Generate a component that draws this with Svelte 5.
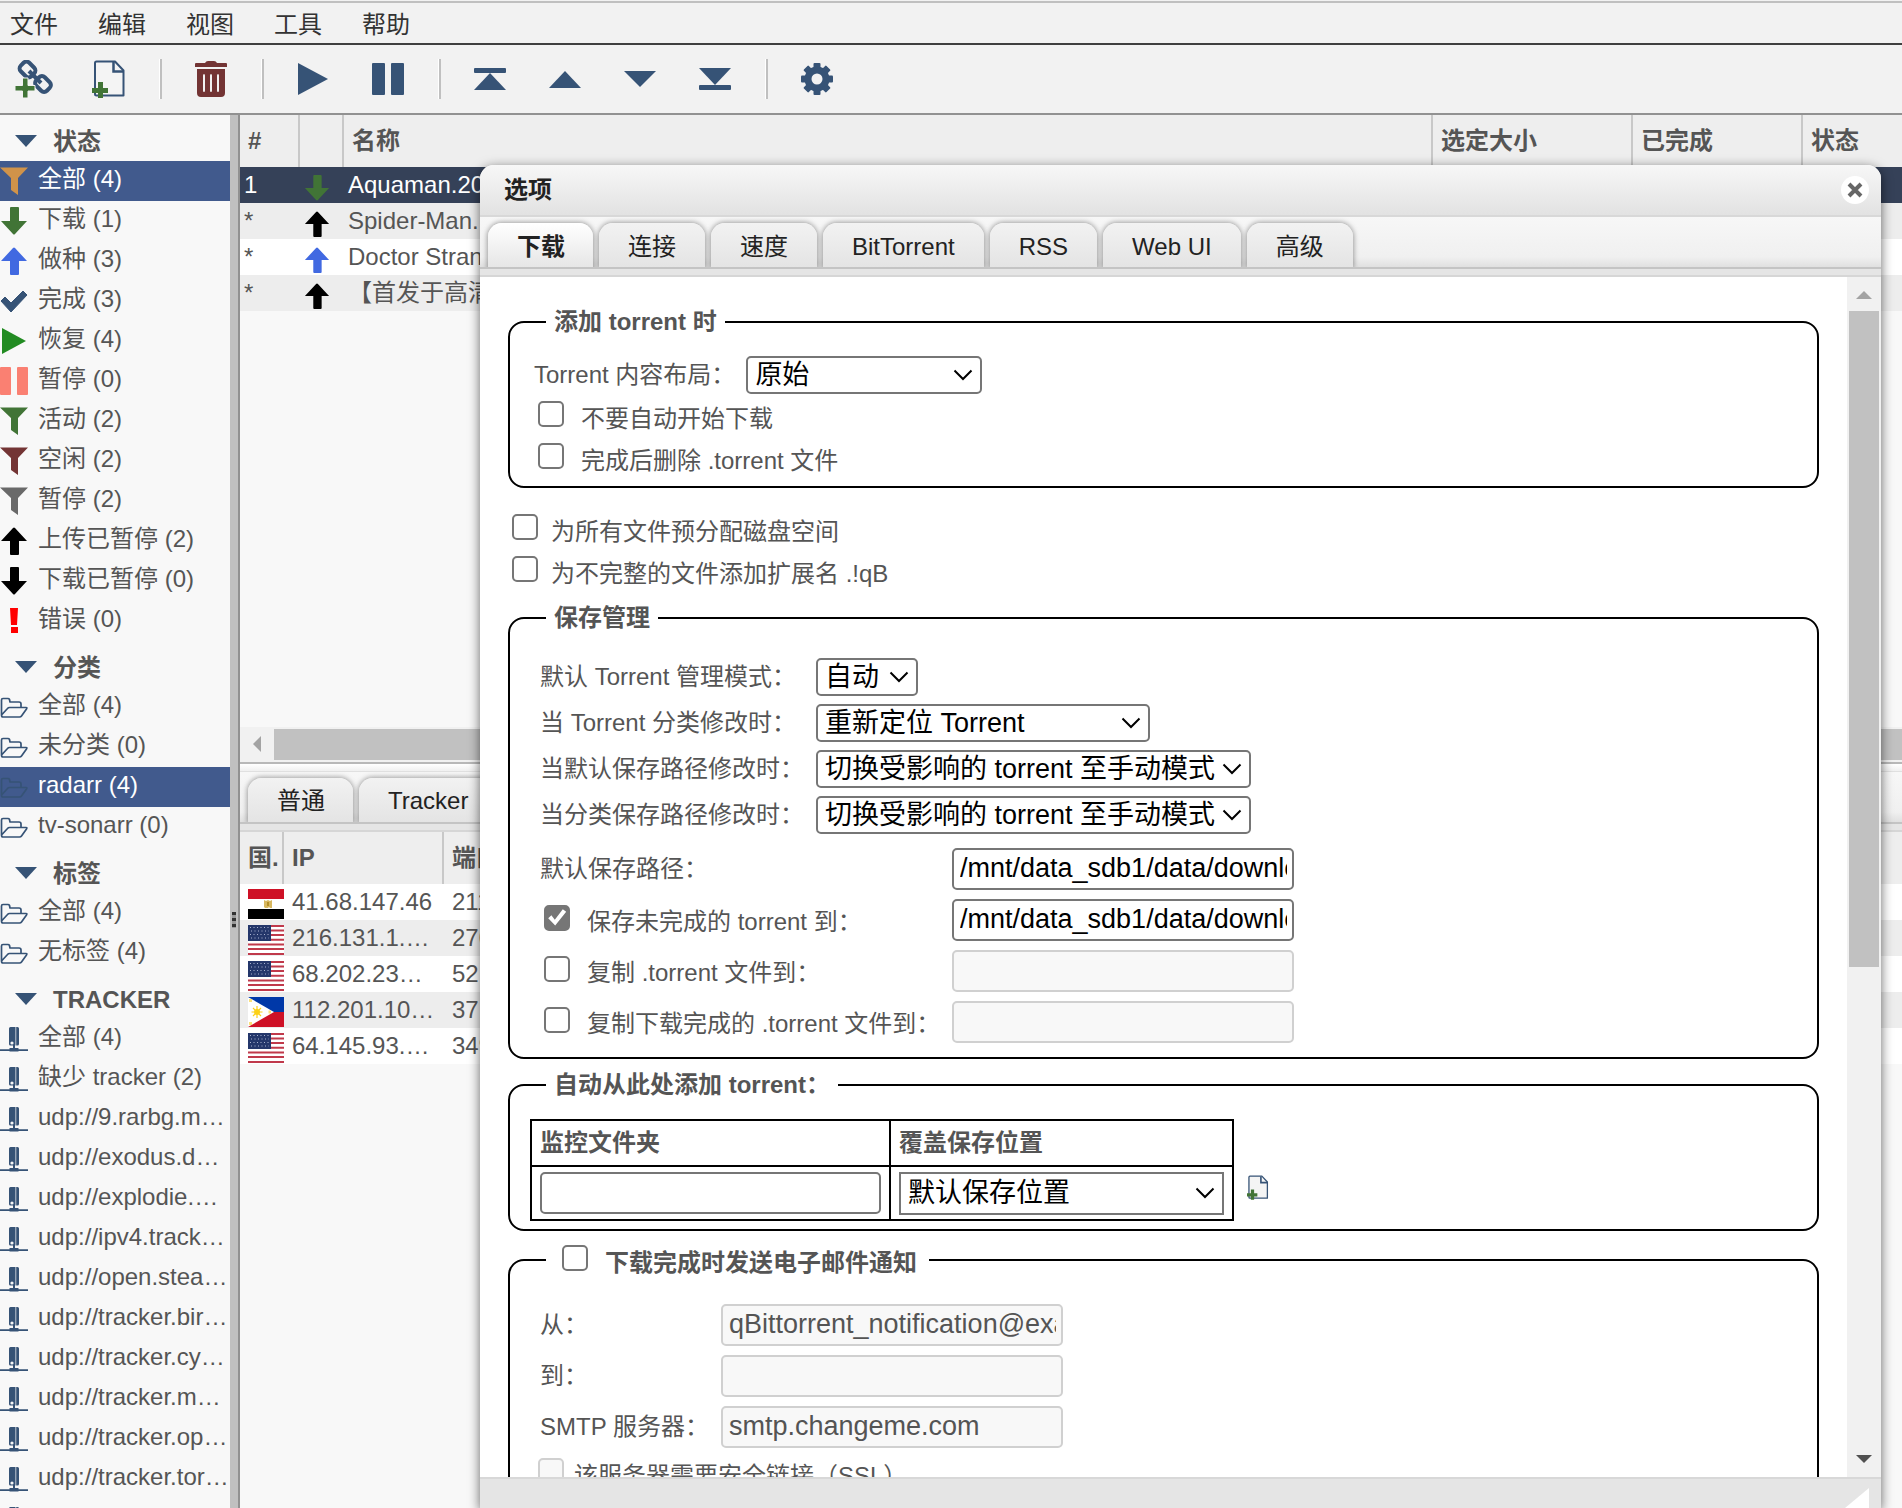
<script>
  // Menu + toolbar
  const menus = ['文件', '编辑', '视图', '工具', '帮助'];
  const tools = [
    { icon: 'link', label: '添加 Torrent 链接' },
    { icon: 'fileadd', label: '添加 Torrent 文件' },
    null,
    { icon: 'trash', label: '删除' },
    null,
    { icon: 'play', label: '恢复' },
    { icon: 'pause', label: '暂停' },
    null,
    { icon: 'top', label: '移到顶部' },
    { icon: 'up', label: '上移' },
    { icon: 'down', label: '下移' },
    { icon: 'bottom', label: '移到底部' },
    null,
    { icon: 'gear', label: '选项' }
  ];

  // Sidebar filters
  const tracker = (text) => ({ icon: 'server', color: '#365376', text });
  const folder = (text) => ({ icon: 'folder', color: '#365376', text });
  const groups = [
    {
      title: '状态',
      items: [
        { icon: 'filter', color: '#d0934a', text: '全部 (4)' },
        { icon: 'arrowdown', color: '#417436', text: '下载 (1)' },
        { icon: 'arrowup', color: '#4169e1', text: '做种 (3)' },
        { icon: 'check', color: '#365376', text: '完成 (3)' },
        { icon: 'resume', color: '#228b22', text: '恢复 (4)' },
        { icon: 'paused', color: '#fa8072', text: '暂停 (0)' },
        { icon: 'filter', color: '#417436', text: '活动 (2)' },
        { icon: 'filter', color: '#733434', text: '空闲 (2)' },
        { icon: 'filter', color: '#696969', text: '暂停 (2)' },
        { icon: 'arrowup', color: '#000', text: '上传已暂停 (2)' },
        { icon: 'arrowdown', color: '#000', text: '下载已暂停 (0)' },
        { icon: 'error', color: '#f00', text: '错误 (0)' }
      ]
    },
    { title: '分类', items: [folder('全部 (4)'), folder('未分类 (0)'), folder('radarr (4)'), folder('tv-sonarr (0)')] },
    { title: '标签', items: [folder('全部 (4)'), folder('无标签 (4)')] },
    {
      title: 'TRACKER',
      items: [
        tracker('全部 (4)'),
        tracker('缺少 tracker (2)'),
        tracker('udp://9.rarbg.me:2970 (1)'),
        tracker('udp://exodus.desync.com (1)'),
        tracker('udp://explodie.org:6969 (1)'),
        tracker('udp://ipv4.tracker.harry.lu (1)'),
        tracker('udp://open.stealth.si (1)'),
        tracker('udp://tracker.birkenwald.de (1)'),
        tracker('udp://tracker.cyberia.is (1)'),
        tracker('udp://tracker.moeking.me (1)'),
        tracker('udp://tracker.opentrackr.org (1)'),
        tracker('udp://tracker.torrent.eu.org (1)'),
        tracker('udp://tracker.zerobytes.xyz (1)')
      ]
    }
  ];

  let selected = $state(['0-0', '1-2']);

  const torrents = [
    { n: '1', icon: 'arrowdown', color: '#417436', name: 'Aquaman.2018' },
    { n: '*', icon: 'arrowup', color: '#000', name: 'Spider-Man.Far' },
    { n: '*', icon: 'arrowup', color: '#4169e1', name: 'Doctor Strange' },
    { n: '*', icon: 'arrowup', color: '#000', name: '【首发于高清影视' }
  ];

  const peers = [
    { flag: 'eg', ip: '41.68.147.46', port: '21139' },
    { flag: 'us', ip: '216.131.1.204', port: '27015' },
    { flag: 'us', ip: '68.202.231.114', port: '52133' },
    { flag: 'ph', ip: '112.201.104.12', port: '37120' },
    { flag: 'us', ip: '64.145.93.114', port: '34902' }
  ];

  // Options dialog
  const tabs = ['下载', '连接', '速度', 'BitTorrent', 'RSS', 'Web UI', '高级'];
  let activeTab = $state('下载');
  let dialogOpen = $state(true);

  const modes = [
    { id: 'tmm', label: '默认 Torrent 管理模式：', value: '自动', size: 'w-mode' },
    { id: 'catchg', label: '当 Torrent 分类修改时：', value: '重新定位 Torrent', size: 'w-relocate' },
    { id: 'pathchg', label: '当默认保存路径修改时：', value: '切换受影响的 torrent 至手动模式', size: 'w-switch' },
    { id: 'catpath', label: '当分类保存路径修改时：', value: '切换受影响的 torrent 至手动模式', size: 'w-switch' }
  ];
  let paths = $state([
    { id: 'temp', label: '保存未完成的 torrent 到：', on: true, value: '/mnt/data_sdb1/data/downloads/temp' },
    { id: 'copy', label: '复制 .torrent 文件到：', on: false, value: '' },
    { id: 'copyfin', label: '复制下载完成的 .torrent 文件到：', on: false, value: '' }
  ]);
  let mailOn = $state(false);
  const mail = [
    { id: 'from', label: '从：', value: 'qBittorrent_notification@example.com' },
    { id: 'to', label: '到：', value: '' },
    { id: 'smtp', label: 'SMTP 服务器：', value: 'smtp.changeme.com' }
  ];

  function pick(g, i) {
    selected = [...selected.filter((k) => !k.startsWith(g + '-')), `${g}-${i}`];
  }
</script>

{#snippet glyph(name)}
  <svg class="glyph" viewBox="0 0 28 28" aria-hidden="true">
    {#if name === 'filter'}
      <path d="M0 0.5h28L18 11v17l-7-5V11z" fill="currentColor" />
    {:else if name === 'arrowdown'}
      <path d="M10 1q0-1 1-1h7q1 0 1 1v13h8L15 27q-1 1-2 0L1 14h9z" fill="currentColor" />
    {:else if name === 'arrowup'}
      <path d="M10 27q0 1 1 1h7q1 0 1-1V14h8L15 1q-1-1-2 0L1 14h9z" fill="currentColor" />
    {:else if name === 'check'}
      <path d="M1 14l4-4 6 6L23 4l4 4-16 17z" fill="currentColor" stroke="currentColor" stroke-linejoin="round" />
    {:else if name === 'resume'}
      <path d="M2 1l24 13L2 27z" fill="currentColor" />
    {:else if name === 'paused'}
      <path d="M1 0h9q1 0 1 1v26q0 1-1 1H1q-1 0-1-1V1q0-1 1-1zM18 0h9q1 0 1 1v26q0 1-1 1h-9q-1 0-1-1V1q0-1 1-1z" fill="currentColor" />
    {:else if name === 'error'}
      <path d="M10 1h8l-1 17h-6zM11 20h7v6h-7z" fill="currentColor" />
    {:else if name === 'folder'}
      <path d="M1.500 22V7q0-1.500 1.500-1.500h5q1 0 1.500 1L10 9h9q2 0 2 2v3.500M1.500 22l6-6.500q.8-1 2-1H26q1.500 0 .5 1.500l-5 7q-.7 1-2 1H3q-1.500 0-1.500-2z" fill="none" stroke="currentColor" stroke-width="1.700" stroke-linejoin="round" />
    {:else if name === 'server'}
      <path d="M10.500 2h5v18.500h-5q-1.500 0-1.500-1.500V3.500Q9 2 10.500 2zM16.200 2h1.300q1.500 0 1.500 1.500V19q0 1.500-1.500 1.500h-1.300z" fill="currentColor" />
      <circle cx="12" cy="18" r="1.600" fill="#f8f8f8" />
      <path d="M13 20h2v4h-2zM9.500 23h9v3.500h-9zM0 24.200h28v1.800H0z" fill="currentColor" />
    {/if}
  </svg>
{/snippet}

{#snippet fileAdd()}
  <svg class="fileadd" viewBox="0 0 34 38" aria-hidden="true">
    <path d="M4.500 1.500H23l8.500 9V35.500h-27q-1.500 0-1.500-1.500V3q0-1.500 1.500-1.500z" fill="#f4f4f4" stroke="#365376" stroke-width="2" stroke-linejoin="round" />
    <path d="M21.500 2v9.500h10" fill="none" stroke="#365376" stroke-width="2.500" />
    <path d="M0 28h6v-6h5v6h5v5h-5v5H6v-5H0z" fill="#417436" />
  </svg>
{/snippet}

{#snippet flag(code)}
  <svg class="flag" viewBox="0 0 36 30" preserveAspectRatio="none" aria-hidden="true">
    {#if code === 'eg'}
      <path d="M0 0h36v10H0z" fill="#ce1126" /><path d="M0 10h36v10H0z" fill="#fff" /><path d="M0 20h36v10H0z" />
      <path d="M16 11l2 1 2-1 2 1 2-1v8h-2l-1-1-1 1h-3l-1-1z" fill="#d8b860" /><path d="M19 13h2v4h-2z" fill="#b58f28" />
    {:else if code === 'us'}
      <path d="M0 0h36v30H0z" fill="#fff" />
      <path d="M0 1h36M0 5.500h36M0 10h36M0 14.800h36M0 19.500h36M0 24h36M0 29h36" stroke="#c0394b" stroke-width="2" />
      <path d="M0 0h23v16H0z" fill="#24376b" />
      <path d="M2 2.500h20M3 6h18M2 9.500h20M3 13h18" stroke="#aab4d0" stroke-width="1" stroke-dasharray="1 2.500" />
    {:else}
      <path d="M0 0h36v15H0z" fill="#0038a8" /><path d="M0 15h36v15H0z" fill="#ce1126" /><path d="M0 0l26 15L0 30z" fill="#fff" />
      <g stroke="#fcd116" stroke-width="1.200"><path d="M9 9v12M3.500 15h11M5 11l8 8M13 11l-8 8" /></g>
      <circle cx="9" cy="15" r="3" fill="#fcd116" />
      <path d="M1 2h3v3H1zM1 25h3v3H1zM20.500 13.500h2.500v3h-2.500z" fill="#fbe07a" />
    {/if}
  </svg>
{/snippet}

{#snippet chevron()}
  <svg class="chevron" viewBox="0 0 20 12" aria-hidden="true"><path d="M1.500 1.500L10 10l8.500-8.500" fill="none" stroke="#000" stroke-width="2" /></svg>
{/snippet}

<div class="app">
  <nav class="menubar">
    {#each menus as m}<button>{m}</button>{/each}
  </nav>

  <div class="toolbar">
    {#each tools as t}
      {#if !t}
        <span class="sep"></span>
      {:else}
        <button aria-label={t.label}>
          {#if t.icon === 'fileadd'}
            {@render fileAdd()}
          {:else}
            <svg width="38" height="38" viewBox="0 0 38 38" fill="#365376" aria-hidden="true">
              {#if t.icon === 'link'}
                <g fill="none" stroke="#365376" stroke-width="4">
                  <rect x="-7.500" y="-6" width="15" height="12" rx="4" transform="translate(12.500 9.500) rotate(45)" />
                  <rect x="-7.500" y="-6" width="15" height="12" rx="4" transform="translate(28 24) rotate(45)" />
                  <path d="M14 11l12 12" />
                </g>
                <path d="M0 25.500h7.500V18h5.500v7.500h7V31h-7v7H7.500v-7H0z" fill="#417436" stroke="#f2f2f2" />
              {:else if t.icon === 'trash'}
                <g fill="#733434">
                  <path d="M13 3q1-2 3-2h6q2 0 3 2h9q1 0 1 1v3H3V4q0-1 1-1z" />
                  <path fill-rule="evenodd" d="M5 9h28v24q0 4-4 4H9q-4 0-4-4zM12 14q-1 0-1 1.500v15q0 1.500 1 1.500t1-1.500v-15Q13 14 12 14zM19 14q-1 0-1 1.500v15q0 1.500 1 1.500t1-1.500v-15Q20 14 19 14zM26 14q-1 0-1 1.500v15q0 1.500 1 1.500t1-1.500v-15Q27 14 26 14z" />
                </g>
              {:else if t.icon === 'play'}
                <path d="M4 3l30 16L4 35z" />
              {:else if t.icon === 'pause'}
                <rect x="3" y="3" width="13" height="32" rx="1" /><rect x="22" y="3" width="13" height="32" rx="1" />
              {:else if t.icon === 'top'}
                <rect x="3" y="8" width="32" height="5" rx="1" /><path d="M19 13l16 17H3z" />
              {:else if t.icon === 'up'}
                <path d="M19 11l16 17H3z" />
              {:else if t.icon === 'down'}
                <path d="M3 11h32L19 27z" />
              {:else if t.icon === 'bottom'}
                <path d="M3 8h32L19 25z" /><rect x="3" y="25" width="32" height="5" rx="1" />
              {:else if t.icon === 'gear'}
                <circle cx="19" cy="19" r="9" fill="none" stroke="#365376" stroke-width="7" />
                {#each [0, 45, 90, 135, 180, 225, 270, 315] as a}
                  <rect x="15.500" y="3" width="7" height="6" rx="1" transform="rotate({a} 19 19)" />
                {/each}
              {/if}
            </svg>
          {/if}
        </button>
      {/if}
    {/each}
  </div>

  <div class="desktop">
    <aside class="sidebar">
      {#each groups as group, g}
        <h2><span class="caret"></span><span>{group.title}</span></h2>
        <ul>
          {#each group.items as item, i}
            <li>
              <button class:selected={selected.includes(`${g}-${i}`)} onclick={() => pick(g, i)}>
                <span class="icon" style:color={item.color}>{@render glyph(item.icon)}</span>
                <span class="text">{item.text}</span>
              </button>
            </li>
          {/each}
        </ul>
      {/each}
    </aside>
    <div class="splitter"><span class="grip"></span></div>

    <main>
      <section class="transfers">
        <table class="grid">
          <colgroup>
            <col class="c-num" /><col class="c-icon" /><col /><col class="c-size" /><col class="c-done" /><col class="c-state" />
          </colgroup>
          <thead>
            <tr><th>#</th><th></th><th>名称</th><th>选定大小</th><th>已完成</th><th>状态</th></tr>
          </thead>
          <tbody>
            {#each torrents as t, i}
              <tr class:current={i === 0}>
                <td>{t.n}</td>
                <td><span class="icon" style:color={t.color}>{@render glyph(t.icon)}</span></td>
                <td>{t.name}</td><td></td><td></td><td></td>
              </tr>
            {/each}
          </tbody>
        </table>
        <div class="hscroll"><span class="arrow-left"></span><span class="hthumb"></span></div>
      </section>

      <section class="details">
        <div class="handle"></div>
        <div class="tabs">
          <button>普通</button>
          <button>Tracker</button>
        </div>
        <div class="tabline"></div>
        <table class="grid peers">
          <colgroup><col class="c-flag" /><col class="c-ip" /><col /></colgroup>
          <thead><tr><th>国.</th><th>IP</th><th>端口</th></tr></thead>
          <tbody>
            {#each peers as p}
              <tr><td>{@render flag(p.flag)}</td><td>{p.ip}</td><td>{p.port}</td></tr>
            {/each}
          </tbody>
        </table>
      </section>
    </main>
  </div>

  {#if dialogOpen}
    <div class="dialog" role="dialog" aria-labelledby="dlg-title">
      <header>
        <h3 id="dlg-title">选项</h3>
        <button class="close" aria-label="关闭" onclick={() => (dialogOpen = false)}>
          <svg width="28" height="28" viewBox="0 0 28 28"><circle cx="14" cy="14" r="14" fill="#fff" /><path d="M8 8l12 12M20 8L8 20" stroke="#666" stroke-width="4" /></svg>
        </button>
      </header>
      <div class="tabs">
        {#each tabs as tab}
          <button class:active={activeTab === tab} onclick={() => (activeTab = tab)}>{tab}</button>
        {/each}
      </div>
      <div class="tabline"></div>

      <div class="body">
        <form class="options">
          <fieldset class="adding">
            <legend>添加 torrent 时</legend>
            <div class="layout-row">
              <label for="layout">Torrent 内容布局：</label>
              <span class="select w-layout"><select id="layout"><option>原始</option></select>{@render chevron()}</span>
            </div>
            <label class="check"><input type="checkbox" /><span>不要自动开始下载</span></label>
            <label class="check"><input type="checkbox" /><span>完成后删除 .torrent 文件</span></label>
          </fieldset>

          <div class="loose">
            <label class="check"><input type="checkbox" /><span>为所有文件预分配磁盘空间</span></label>
            <label class="check"><input type="checkbox" /><span>为不完整的文件添加扩展名 .!qB</span></label>
          </div>

          <fieldset class="saving">
            <legend>保存管理</legend>
            <div class="modes">
              {#each modes as m}
                <label for={m.id}>{m.label}</label>
                <span class="select {m.size}"><select id={m.id}><option>{m.value}</option></select>{@render chevron()}</span>
              {/each}
            </div>
            <div class="paths">
              <label for="savepath">默认保存路径：</label>
              <input id="savepath" type="text" value="/mnt/data_sdb1/data/downloads" />
              {#each paths as p}
                <label class="check"><input type="checkbox" bind:checked={p.on} /><span>{p.label}</span></label>
                <input type="text" aria-label={p.label} bind:value={p.value} disabled={!p.on} />
              {/each}
            </div>
          </fieldset>

          <fieldset class="watching">
            <legend>自动从此处添加 torrent：</legend>
            <div class="watch">
              <table>
                <thead><tr><th>监控文件夹</th><th>覆盖保存位置</th></tr></thead>
                <tbody>
                  <tr>
                    <td><input type="text" aria-label="监控文件夹" /></td>
                    <td><span class="select w-watch"><select aria-label="覆盖保存位置"><option>默认保存位置</option></select>{@render chevron()}</span></td>
                  </tr>
                </tbody>
              </table>
              <button type="button" class="addrow" aria-label="添加">{@render fileAdd()}</button>
            </div>
          </fieldset>

          <fieldset class="mailing">
            <legend><label class="check"><input type="checkbox" bind:checked={mailOn} /><span>下载完成时发送电子邮件通知</span></label></legend>
            <div class="mail">
              {#each mail as m}
                <label for={m.id}>{m.label}</label>
                <input id={m.id} type="text" value={m.value} disabled={!mailOn} />
              {/each}
            </div>
            <label class="check ssl"><input type="checkbox" disabled={!mailOn} /><span>该服务器需要安全链接（SSL）</span></label>
          </fieldset>
        </form>
        <div class="vscroll"><span class="arrow-up"></span><span class="vthumb"></span><span class="arrow-down"></span></div>
      </div>
      <footer><svg width="24" height="20" viewBox="0 0 24 20" aria-hidden="true"><path d="M24 0v20H0z" fill="#fff" /></svg></footer>
    </div>
  {/if}
</div>

<style>
  :global(body) { margin: 0; }
  .app, .app :is(button, input, select) { font-family: "Liberation Sans", Arial, "Noto Sans CJK SC", sans-serif; }
  .app { position: relative; display: flex; flex-direction: column; height: 100vh; overflow: hidden; box-sizing: border-box; padding-top: 1px; background: #f2f2f2; color: #555; font-size: 24px; line-height: 36px; }
  .app * { box-sizing: border-box; }
  button { padding: 0; border: 0; background: none; color: inherit; font-size: 24px; line-height: 36px; cursor: pointer; }

  /* menu + toolbar */
  .menubar { display: flex; gap: 40px; height: 44px; padding: 4px 10px 0; border-top: 2px solid #c0c0c0; border-bottom: 2px solid #3f3f3f; color: #333; flex: none; }
  .menubar button { height: 36px; }
  .toolbar { display: flex; align-items: center; gap: 13px; height: 70px; padding-left: 3px; border-bottom: 2px solid #919191; flex: none; }
  .toolbar button { display: flex; align-items: center; justify-content: center; width: 62px; height: 60px; }
  .sep { width: 3px; height: 40px; margin: 0 5px 0 6px; border-left: 1px solid #fff; background: #c0c0c0; }
  .fileadd { width: 34px; height: 38px; }

  .desktop { flex: 1; display: flex; min-height: 0; }

  /* sidebar */
  .sidebar { width: 230px; flex: none; overflow: hidden; background: #f8f8f8; }
  .sidebar h2 { display: flex; align-items: center; gap: 16px; height: 46px; margin: 0; padding: 8px 0 0 15px; font-size: 24px; }
  .caret { margin-bottom: 2px; border: 11px solid transparent; border-top: 12px solid #365376; border-bottom: 0; }
  .sidebar ul { margin: 0; padding: 0; list-style: none; }
  .sidebar li button { display: flex; align-items: center; gap: 10px; width: 100%; height: 40px; text-align: left; }
  .sidebar li button.selected { background: #415a8d; color: #fff; }
  .icon { display: block; width: 28px; height: 28px; flex: none; }
  .glyph { display: block; width: 100%; height: 100%; }
  .text { min-width: 0; height: 40px; overflow: hidden; text-overflow: ellipsis; white-space: nowrap; }
  .splitter { display: flex; align-items: center; justify-content: center; width: 10px; flex: none; background: #c0c0c0; border-right: 2px solid #919191; }
  .grip { width: 4px; height: 16px; margin-top: 216px; background: repeating-linear-gradient(#333 0 3px, #999 3px 6px); }

  /* tables */
  main { flex: 1; display: flex; flex-direction: column; min-width: 0; background: #f8f8f8; }
  .transfers { flex: 20; display: flex; flex-direction: column; min-height: 0; border-bottom: 2px solid #b8b8b8; }
  .details { flex: 23; min-height: 0; overflow: hidden; }
  .grid { width: 100%; table-layout: fixed; border-collapse: separate; border-spacing: 0; }
  .grid th { height: 52px; padding: 0 8px; border-right: 2px solid #c8c8c8; background: #eee; text-align: left; white-space: nowrap; overflow: hidden; }
  .grid th:last-child { border-right: 0; }
  .grid td { height: 36px; padding: 0 4px; line-height: 34px; overflow: hidden; text-overflow: ellipsis; white-space: nowrap; }
  .grid tbody tr { background: #fff; }
  .grid tbody tr:nth-child(even) { background: #ededed; }
  .grid tbody tr.current { background: #354158; color: #fff; }
  .grid .icon { width: 26px; height: 26px; margin-top: 5px; }
  .c-num { width: 60px; }
  .c-icon { width: 44px; }
  .c-size { width: 200px; }
  .c-done { width: 170px; }
  .c-state { width: 99px; }
  .c-flag { width: 44px; }
  .c-ip { width: 160px; }
  .grid.peers td { padding: 0 8px; }
  .grid.peers td:first-child { padding-right: 0; }
  .flag { display: block; width: 36px; height: 30px; margin-top: 5px; }
  .hscroll { display: flex; align-items: center; height: 35px; margin-top: auto; padding-left: 13px; background: #f1f1f1; }
  .arrow-left { border: 8px solid transparent; border-right-color: #a3a3a3; border-left: 0; }
  .hthumb { flex: 1; height: 31px; margin-left: 13px; background: #c1c1c1; }
  .handle { height: 8px; background: linear-gradient(#fff, #f0f0f0); border-bottom: 1px solid #e0e0e0; }

  /* tabs, shared by the lower panel and the dialog */
  .tabs { display: flex; align-items: flex-end; gap: 6px; height: 52px; padding-left: 8px; overflow: hidden; background: linear-gradient(#f7f7f7, #f0f0f0 80%, #e0e0e0); border-bottom: 2px solid #c4c4c4; flex: none; }
  .tabs button { height: 44px; padding: 3px 28px 0 29px; border-radius: 14px 14px 0 0; background: linear-gradient(#f2f2f2, #e4e4e4); box-shadow: 0 0 5px 1px rgba(0, 0, 0, 0.35); color: #222; }
  .tabs button + button { padding-right: 29px; }
  .tabs button.active { height: 46px; margin-bottom: -2px; padding-top: 1px; background: linear-gradient(#fff, #e5e5e5); font-weight: bold; }
  .tabline { height: 8px; background: #e5e5e5; border-bottom: 2px solid #d6d6d6; flex: none; }

  /* dialog */
  .dialog { position: absolute; top: 165px; left: 480px; right: 21px; bottom: 0; display: flex; flex-direction: column; border-radius: 14px 14px 0 0; background: #fff; box-shadow: 0 3px 12px rgba(0, 0, 0, 0.6); }
  .dialog header { display: flex; align-items: center; justify-content: space-between; height: 52px; padding: 0 12px 0 24px; border-radius: 14px 14px 0 0; border-bottom: 2px solid #d8d8d8; background: linear-gradient(#f7f7f7, #e2e2e2); flex: none; }
  .dialog h3 { margin: 0; font-size: 24px; color: #222; }
  .close, .close svg { display: block; }
  .body { flex: 1; display: flex; min-height: 0; }
  .options { flex: 1; min-width: 0; padding: 27px 28px 0; overflow: hidden; }
  .dialog footer { display: flex; justify-content: flex-end; align-items: flex-end; height: 31px; padding-right: 12px; border-top: 2px solid #d8d8d8; background: #e5e5e5; flex: none; }
  .vscroll { display: flex; flex-direction: column; align-items: center; width: 34px; padding: 14px 0; background: #f1f1f1; }
  .arrow-up { border: 8px solid transparent; border-bottom-color: #a3a3a3; border-top: 0; }
  .arrow-down { margin-top: auto; border: 8px solid transparent; border-top-color: #505050; border-bottom: 0; }
  .vthumb { width: 30px; height: 56%; margin-top: 12px; background: #c1c1c1; }

  fieldset { min-width: 0; margin: 0 0 8px; border: 2px solid #000; border-radius: 16px; }
  legend { margin-left: 16px; padding: 0 8px; font-weight: bold; }
  .adding { padding: 15px 20px 7px; }
  .saving { padding: 18px 20px 10px; }
  .watching { padding: 16px 20px 8px; }
  .mailing { padding: 18px 20px 10px; }

  input[type="text"] { width: 342px; height: 42px; padding: 0 5px 0 6px; border: 2px solid #767676; border-radius: 5px; background: #fff; color: #000; font-size: 27px; }
  input[type="text"]:disabled { border-color: #d0d0d0; background: #f8f8f8; color: #545454; }
  input[type="checkbox"] { appearance: none; display: grid; place-items: center; width: 26px; height: 26px; margin: 0; border: 2px solid #767676; border-radius: 5px; background: #fff; flex: none; }
  input[type="checkbox"]:checked { background: #767676; }
  input[type="checkbox"]:checked::after { content: ""; width: 20px; height: 18px; background: #fff; clip-path: polygon(6% 54%, 22% 38%, 39% 62%, 79% 4%, 96% 18%, 41% 94%); }
  input[type="checkbox"]:disabled { border-color: #d0d0d0; background: #f8f8f8; }
  .check { display: flex; align-items: center; gap: 17px; height: 42px; }
  .check input { margin-bottom: 4px; }
  .check span { margin-top: 5px; white-space: nowrap; }

  .select { display: inline-grid; align-items: center; }
  .select > :global(*) { grid-area: 1 / 1; }
  select { appearance: none; width: 100%; height: 38px; padding: 0 7px; border: 2px solid #767676; border-radius: 5px; background: #fff; color: #000; font-size: 27px; line-height: 34px; }
  .chevron { justify-self: end; width: 20px; height: 12px; margin-right: 9px; pointer-events: none; }
  .w-layout { width: 236px; }
  .w-mode { width: 102px; }
  .w-relocate { width: 334px; }
  .w-switch { width: 435px; }
  .w-watch { width: 325px; }
  .w-watch select { height: 43px; border-radius: 0; }

  .layout-row { display: flex; align-items: center; gap: 11px; height: 40px; padding-left: 4px; }
  .adding .check { padding-left: 8px; }
  .loose { padding: 12px 0 8px 4px; }
  .loose .check { gap: 13px; }
  .modes, .paths, .mail { display: grid; align-items: center; padding-left: 10px; }
  .modes { grid-template-columns: 276px 1fr; grid-auto-rows: 46px; }
  .paths { grid-template-columns: 412px 1fr; grid-auto-rows: 51px; margin-top: 5px; }
  .paths .check { padding-left: 4px; }
  .mail { grid-template-columns: 181px 1fr; grid-auto-rows: 51px; }
  legend .check { padding: 0 4px 0 8px; }
  .ssl { gap: 10px; padding-left: 8px; }

  .watch { display: flex; align-items: center; gap: 13px; }
  .watch table { border-collapse: collapse; }
  .watch th, .watch td { border: 2px solid #000; padding: 4px 8px; text-align: left; }
  .watch th { height: 46px; }
  .watch td { height: 54px; }
  .watch td > * { display: block; }
  .watch td input[type="text"] { width: 341px; }
  .watch td .select { display: grid; }
  .addrow { margin-top: 34px; }
  .addrow :global(svg) { display: block; width: 22px; height: 25px; }
</style>
